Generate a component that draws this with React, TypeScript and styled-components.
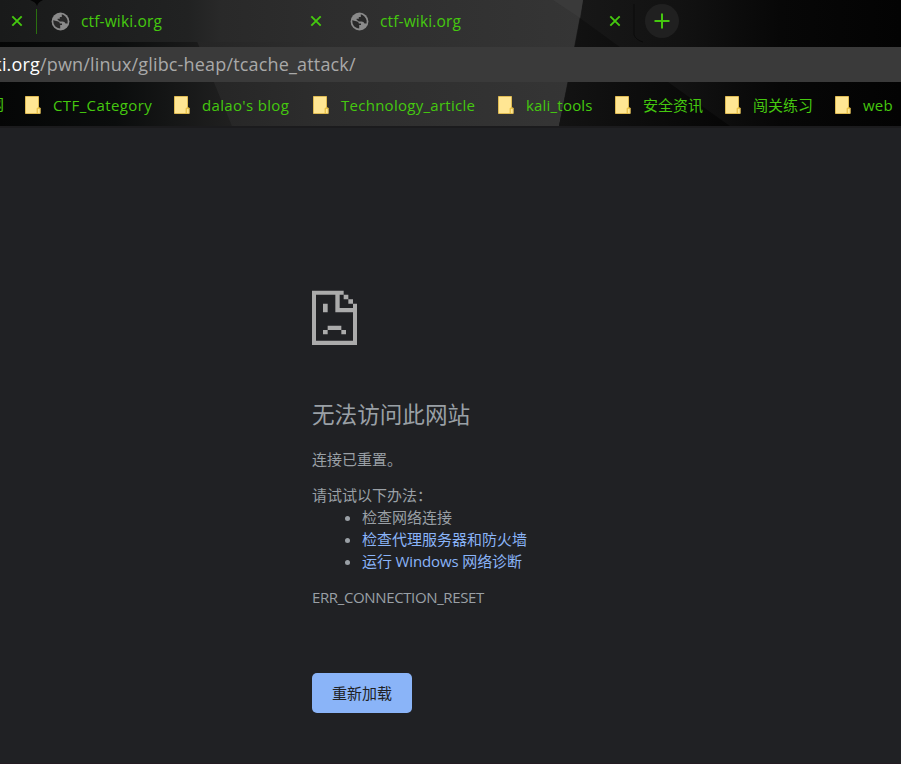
import React from 'react';
import styled, { createGlobalStyle } from 'styled-components';

const GlobalStyle = createGlobalStyle`
  * { box-sizing: border-box; }
  body {
    margin: 0;
    background: #202124;
    overflow: hidden;
    font-family: "Open Sans", "Noto Sans CJK SC", sans-serif;
  }
`;

const Window = styled.div`
  width: 901px;
  height: 764px;
  display: flex;
  flex-direction: column;
  overflow: hidden;
  border-bottom: 1px solid #231c22;
`;

const Chrome = styled.header`
  position: relative;
  height: 128px;
  flex: none;
  isolation: isolate;
  border-bottom: 2px solid #1b1b1d;
`;

const Backdrop = styled.svg`
  position: absolute;
  inset: 0;
  z-index: -1;
`;

const TabStrip = styled.div`
  display: flex;
  height: 47px;
  align-items: flex-start;
`;

const Tab = styled.div`
  display: flex;
  align-items: center;
  flex: none;
  width: 299px;
  height: 42px;
  padding: 0 14px 0 14px;
`;

const TabTitle = styled.span`
  flex: 1;
  margin-left: 11px;
  font-size: 15.5px;
  letter-spacing: 0.14px;
  line-height: 22px;
  color: #45c80f;
  white-space: nowrap;
`;

const FirstTabEnd = styled.div`
  display: flex;
  align-items: center;
  width: 37px;
  height: 42px;
  padding-left: 11px;
  flex: none;
`;

const Divider = styled.i`
  width: 1px;
  height: 25px;
  margin-left: 13px;
  background: #2b7010;
`;

const NewTab = styled.button`
  display: grid;
  place-items: center;
  width: 34px;
  height: 34px;
  margin: 4px 0 0 10px;
  padding: 0;
  border: 0;
  border-radius: 50%;
  background: #202020;
`;

const AddressBar = styled.div`
  display: flex;
  height: 35px;
  background: #3a3a3a;
  color: #a9a9a9;
  font-size: 18px;
  letter-spacing: 0.17px;
  line-height: 35px;
  overflow: hidden;
  white-space: nowrap;
`;

const Host = styled.span`
  display: flex;
  justify-content: flex-end;
  width: 40px;
  flex: none;
  color: #fff;
`;

const Bookmarks = styled.nav`
  display: flex;
  height: 44px;
`;

const ClippedBookmark = styled.div`
  display: flex;
  justify-content: flex-end;
  width: 4px;
  height: 44px;
  margin-right: 21px;
  overflow: hidden;
  flex: none;
  color: #45c80f;
  font-size: 15px;
  line-height: 44px;
`;

const Bookmark = styled.div<{ $width: number; $spacing: number }>`
  display: flex;
  align-items: center;
  gap: 12px;
  flex: none;
  width: ${(p) => p.$width}px;
  height: 46px;
  color: #45c80f;
  font-size: 15px;
  line-height: 22px;
  letter-spacing: ${(p) => p.$spacing}px;
  white-space: nowrap;
`;

const ErrorPage = styled.main`
  display: flex;
  flex-direction: column;
  align-items: flex-start;
  padding: 162px 0 0 312px;
  color: #9aa0a6;
  font-size: 15px;
  line-height: 22px;
`;

const Title = styled.h1`
  margin: 52px 0 0;
  font-size: 22.6px;
  font-weight: 400;
  line-height: 36px;
`;

const Message = styled.p<{ $top: number; $spacing?: number }>`
  margin: ${(p) => p.$top}px 0 0;
  letter-spacing: ${(p) => p.$spacing ?? 0}px;
`;

const Suggestions = styled.ul`
  margin: 0;
  padding: 0 0 0 33px;
  list-style: none;
`;

const Suggestion = styled.li<{ $link?: boolean; $spacing?: number }>`
  display: flex;
  align-items: center;
  color: ${(p) => (p.$link ? '#8ab4f8' : '#9aa0a6')};
  letter-spacing: ${(p) => p.$spacing ?? 0}px;
  white-space: nowrap;

  &::before {
    content: '';
    width: 5px;
    height: 5px;
    margin: 2px 12px 0 0;
    border-radius: 50%;
    background: #9aa0a6;
  }
`;

const Reload = styled.button`
  width: 100px;
  height: 40px;
  margin-top: 65px;
  padding: 0;
  border: 0;
  border-radius: 5px;
  background: #8ab4f8;
  color: #202124;
  font: inherit;
`;

const CloseIcon = () => (
  <svg width="12" height="12" viewBox="0 0 12 12" stroke="#45c80f" strokeWidth="1.9">
    <path d="M1.3 1.3l9.4 9.4M10.7 1.3L1.3 10.7" />
  </svg>
);

const GlobeIcon = () => (
  <svg width="19" height="19" viewBox="0 0 19 19">
    <circle cx="9.5" cy="9.5" r="8.9" fill="#8a8a8a" />
    <path
      fill="#292929"
      d="M2.2 8.2L7.2 9.4Q8.8 9.8 8.8 11.4H11V13H9.2V16.4Q4.3 16.2 2.6 11.6ZM10.8 2.2Q15.6 3.8 16.6 8.6V11.6H14.5Q13.8 9.6 11.6 9.6H8.8L6.6 7.8V6.8H8.8V5H10.8Z"
    />
  </svg>
);

const FolderIcon = () => (
  <svg width="16" height="18" viewBox="0 0 16 18">
    <path d="M.5.5h13v11.5h1.7v5.5H.5Z" fill="#ffe693" stroke="#dfbb53" />
    <path d="M12.2 17.5v-5.3h2.9" fill="none" stroke="#e3b833" />
  </svg>
);

const SadPage = () => (
  <svg width="45" height="55" viewBox="0 0 135 165" fill="#ababab">
    <path d="M0 2H95V14H109V28H123V41H135V165H0ZM12 14V152H123V67H70V14ZM83 14V54H123V41H109V28H95V14Z" fillRule="evenodd" />
    <path d="M33 41h14v26H33ZM47 107h41v13H47ZM33 120h14v13H33ZM88 120h14v13H88Z" />
  </svg>
);

const BOOKMARKS = [
  { label: 'CTF_Category', width: 149, spacing: 0.4 },
  { label: "dalao's blog", width: 139, spacing: 0.34 },
  { label: 'Technology_article', width: 185, spacing: 0.27 },
  { label: 'kali_tools', width: 117, spacing: 0.2 },
  { label: '安全资讯', width: 110, spacing: 0 },
  { label: '闯关练习', width: 110, spacing: 0 },
  { label: 'web', width: 60, spacing: 0.25 },
];

export default function App() {
  return (
    <>
      <GlobalStyle />
      <Window>
        <Chrome>
          <Backdrop width="901" height="126" viewBox="0 0 901 126">
            <defs>
              <linearGradient id="left" gradientUnits="userSpaceOnUse" x1="0" y1="0" x2="232" y2="0">
                <stop offset="0" stopColor="#050606" />
                <stop offset="0.5" stopColor="#0b0d0d" />
                <stop offset="1" stopColor="#202020" />
              </linearGradient>
              <linearGradient id="center" x1="0" x2="1">
                <stop offset="0" stopColor="#242424" />
                <stop offset="0.35" stopColor="#2d2d2d" />
                <stop offset="1" stopColor="#353535" />
              </linearGradient>
              <linearGradient id="top" x1="0" x2="1">
                <stop offset="0" stopColor="#191a1a" />
                <stop offset="0.55" stopColor="#212222" />
                <stop offset="0.65" stopColor="#292929" />
                <stop offset="1" stopColor="#2e2e2e" />
              </linearGradient>
              <linearGradient id="right" x1="0" x2="1">
                <stop offset="0" stopColor="#181818" />
                <stop offset="0.35" stopColor="#121212" />
                <stop offset="0.65" stopColor="#070707" />
                <stop offset="1" stopColor="#030303" />
              </linearGradient>
              <linearGradient id="shade" x1="0" x2="1">
                <stop offset="0" stopColor="#131313" />
                <stop offset="1" stopColor="#060606" />
              </linearGradient>
            </defs>
            <rect width="901" height="126" fill="url(#left)" />
            <path d="M180 0H583L559 126H232Z" fill="url(#center)" />
            <rect width="340" height="42" fill="url(#top)" />
            <path d="M583 0H901V126H559L568 82L577 47Z" fill="url(#right)" />
            <path d="M553 0H583L580 18Z" fill="#3a3a3a" />
            <path d="M580 18L668 82L730 126H559L568 82Z" fill="url(#shade)" />
            <path d="M634 4V35Q636 40 643 42" fill="none" stroke="#0b0b0b" />
            <path d="M30 0H43Q38 2 37 6Q36 2 30 0Z" fill="#050505" />
          </Backdrop>
          <TabStrip>
            <FirstTabEnd><CloseIcon /><Divider /></FirstTabEnd>
            <Tab><GlobeIcon /><TabTitle>ctf-wiki.org</TabTitle><CloseIcon /></Tab>
            <Tab><GlobeIcon /><TabTitle>ctf-wiki.org</TabTitle><CloseIcon /></Tab>
            <NewTab aria-label="New tab">
              <svg width="16" height="16" stroke="#45c80f" strokeWidth="2"><path d="M8 .5v15M.5 8h15" /></svg>
            </NewTab>
          </TabStrip>
          <AddressBar><Host>ki.org</Host>/pwn/linux/glibc-heap/tcache_attack/</AddressBar>
          <Bookmarks>
            <ClippedBookmark>网</ClippedBookmark>
            {BOOKMARKS.map((b) => (
              <Bookmark key={b.label} $width={b.width} $spacing={b.spacing}><FolderIcon />{b.label}</Bookmark>
            ))}
          </Bookmarks>
        </Chrome>
        <ErrorPage>
          <SadPage />
          <Title>无法访问此网站</Title>
          <Message $top={15}>连接已重置。</Message>
          <Message $top={14}>请试试以下办法：</Message>
          <Suggestions>
            <Suggestion>检查网络连接</Suggestion>
            <Suggestion $link>检查代理服务器和防火墙</Suggestion>
            <Suggestion $link $spacing={-0.12}>运行 Windows 网络诊断</Suggestion>
          </Suggestions>
          <Message $top={14} $spacing={-0.37}>ERR_CONNECTION_RESET</Message>
          <Reload>重新加载</Reload>
        </ErrorPage>
      </Window>
    </>
  );
}
